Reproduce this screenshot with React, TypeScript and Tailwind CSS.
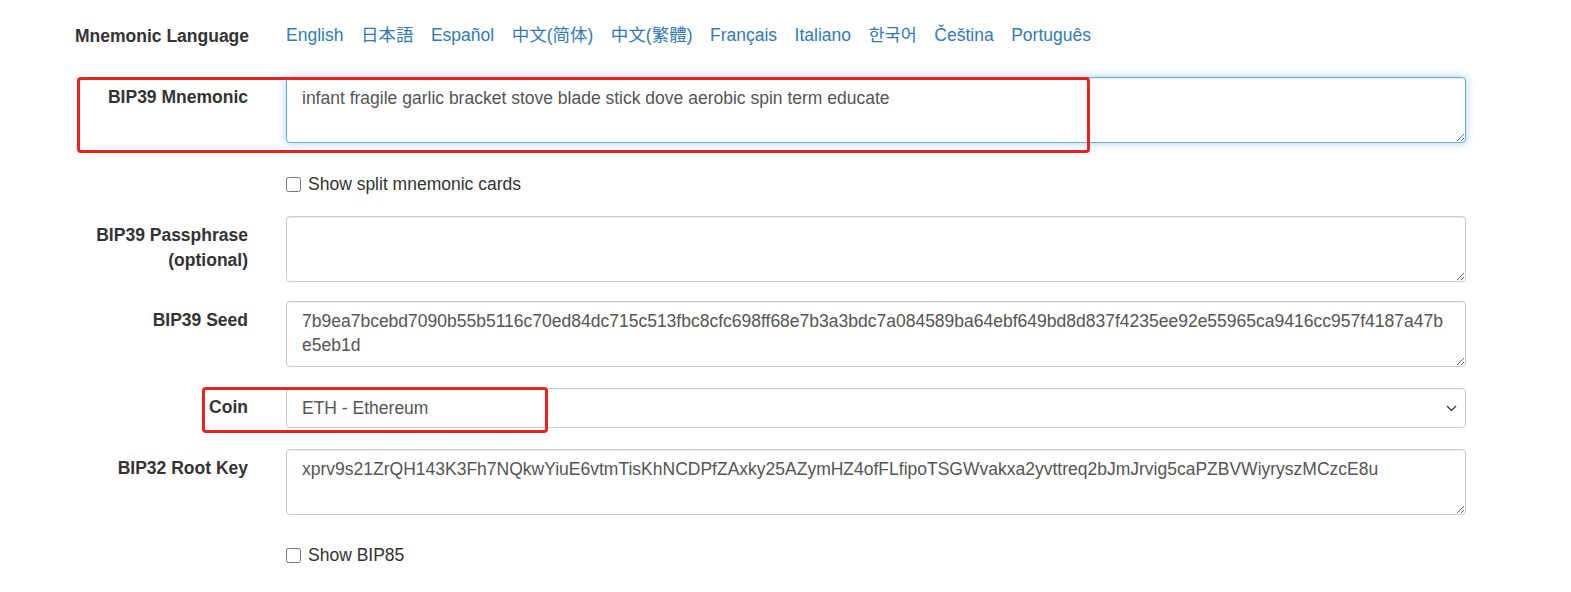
import type { ReactNode } from 'react';

const languages = [
  { name: 'English', font: '' },
  { name: '日本語', font: "font-['Liberation_Sans','Noto_Sans_CJK_JP',sans-serif]" },
  { name: 'Español', font: '' },
  { name: '中文(简体)', font: "font-['Liberation_Sans','Noto_Sans_CJK_SC',sans-serif]" },
  { name: '中文(繁體)', font: "font-['Liberation_Sans','Noto_Sans_CJK_TC',sans-serif]" },
  { name: 'Français', font: '' },
  { name: 'Italiano', font: '' },
  { name: '한국어', font: "font-['Liberation_Sans','Noto_Sans_CJK_KR',sans-serif]" },
  { name: 'Čeština', font: '' },
  { name: 'Português', font: '' }
];

const fieldBase =
  'block w-full rounded-[4px] border bg-white px-[15px] py-[7.5px] text-[17.5px] leading-[24px] text-[#555] outline-none';

const plain = 'border-[#ccc] shadow-[inset_0_1px_1px_rgba(0,0,0,0.075)]';
const focusedStyle = 'border-[#66afe9] shadow-[inset_0_1px_1px_rgba(0,0,0,0.075),0_0_8px_rgba(102,175,233,0.6)]';

function Row({ label, children, className = '' }: { label: ReactNode; children: ReactNode; className?: string }) {
  return (
    <div className={`flex items-start gap-[38px] ${className}`}>
      <label className="w-[248px] shrink-0 pt-[7.5px] text-right text-[17.5px] font-bold leading-[25px] text-[#333]">{label}</label>
      <div className="w-[1180px] shrink-0">{children}</div>
    </div>
  );
}

function Area({ value, focused = false }: { value?: string; focused?: boolean }) {
  return <textarea readOnly defaultValue={value} className={`${fieldBase} h-[66px] ${focused ? focusedStyle : plain}`} />;
}

function Check({ text }: { text: string }) {
  return (
    <div className="ml-[286px] flex items-center gap-[7px] text-[17.5px] leading-[25px] text-[#333]">
      <input type="checkbox" className="m-0 h-[15px] w-[15px]" />
      <span>{text}</span>
    </div>
  );
}

export default function App() {
  return (
    <div className="relative h-[592px] w-[1571px] overflow-hidden bg-white pt-[24px] font-['Liberation_Sans',Arial,sans-serif] text-[17.5px] text-[#333]">
      <div className="flex items-start gap-[38px]">
        <div className="w-[248px] shrink-0 whitespace-nowrap pl-[75px] text-[17.5px] font-bold leading-[25px] text-[#333]">
          Mnemonic Language
        </div>
        <div className="-mt-[1px] flex gap-[17.5px] text-[17.5px] leading-[25px]">
          {languages.map((l) => (
            <a key={l.name} href="#" className={`text-[#337ab7] ${l.font}`}>
              {l.name}
            </a>
          ))}
        </div>
      </div>

      <Row label="BIP39 Mnemonic" className="mt-[28px]">
        <Area focused value="infant fragile garlic bracket stove blade stick dove aerobic spin term educate" />
      </Row>

      <div className="mt-[28.5px]">
        <Check text="Show split mnemonic cards" />
      </div>

      <Row
        className="mt-[19px]"
        label={
          <>
            BIP39 Passphrase
            <br />
            (optional)
          </>
        }
      >
        <Area />
      </Row>

      <Row label="BIP39 Seed" className="mt-[19px]">
        <Area value="7b9ea7bcebd7090b55b5116c70ed84dc715c513fbc8cfc698ff68e7b3a3bdc7a084589ba64ebf649bd8d837f4235ee92e55965ca9416cc957f4187a47be5eb1d" />
      </Row>

      <Row label="Coin" className="mt-[21px]">
        <div className="relative">
          <select className={`${fieldBase} ${plain} h-[40px] appearance-none py-0`} defaultValue="eth">
            <option value="eth">ETH - Ethereum</option>
          </select>
          <svg className="pointer-events-none absolute right-[9px] top-[17px]" width="11" height="7" viewBox="0 0 11 7" fill="none">
            <path d="M1 1l4.5 4.5L10 1" stroke="#444" strokeWidth="1.4" />
          </svg>
        </div>
      </Row>

      <Row label="BIP32 Root Key" className="mt-[21px]">
        <Area value="xprv9s21ZrQH143K3Fh7NQkwYiuE6vtmTisKhNCDPfZAxky25AZymHZ4ofFLfipoTSGWvakxa2yvttreq2bJmJrvig5caPZBVWiyryszMCzcE8u" />
      </Row>

      <div className="mt-[28.5px]">
        <Check text="Show BIP85" />
      </div>

      <div className="pointer-events-none absolute left-[77px] top-[77px] h-[76px] w-[1013px] rounded-[4px] border-[3.5px] border-[#e8231d]" />
      <div className="pointer-events-none absolute left-[202px] top-[387px] h-[46px] w-[346px] rounded-[4px] border-[3.5px] border-[#e8231d]" />
    </div>
  );
}
